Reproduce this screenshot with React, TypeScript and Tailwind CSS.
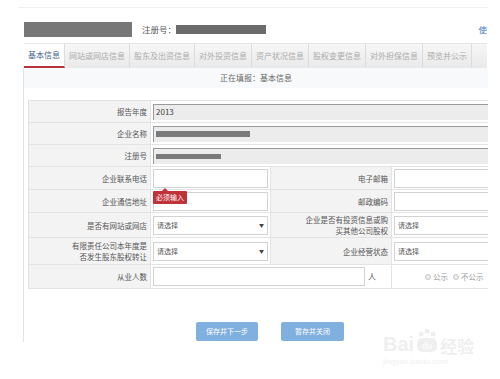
const tabs = [
  "基本信息",
  "网站或网店信息",
  "股东及出资信息",
  "对外投资信息",
  "资产状况信息",
  "股权变更信息",
  "对外担保信息",
  "预览并公示",
];

const font = { fontFamily: '"Noto Sans CJK SC", "Noto Sans", sans-serif' };

function Label({ children, className = "" }: { children: React.ReactNode; className?: string }) {
  return (
    <div
      className={`flex items-center justify-end pr-[3px] bg-[#f3f3f3] text-[#555] text-[7.5px] leading-[11px] text-right border-b border-r border-[#e3e3e3] ${className}`}
    >
      {children}
    </div>
  );
}

function Cell({ children, className = "" }: { children?: React.ReactNode; className?: string }) {
  return (
    <div className={`flex items-center pl-[2px] bg-white border-b border-r border-[#e3e3e3] ${className}`}>
      {children}
    </div>
  );
}

function TextBox({ w = "w-[115px]" }: { w?: string }) {
  return <div className={`h-[19px] ${w} shrink-0 border border-[#d2d2d2] bg-white`} />;
}

function Select({ w = "w-[115px]", arrow = true }: { w?: string; arrow?: boolean }) {
  return (
    <div
      className={`h-[19px] ${w} shrink-0 border border-[#d2d2d2] bg-white flex items-center justify-between pl-[3px] pr-[3px] text-[7px] text-[#555]`}
    >
      <span>请选择</span>
      {arrow && <span className="text-[5px] text-[#444]">▼</span>}
    </div>
  );
}

function Disabled({ children }: { children?: React.ReactNode }) {
  return (
    <div className="h-[16px] w-full bg-[#ececec] border-t border-l border-[#9a9a9a] flex items-center pl-[2px] text-[8px] text-[#444]">
      {children}
    </div>
  );
}

export default function App() {
  return (
    <div className="w-[500px] h-[379px] bg-white overflow-hidden relative" style={font}>
      <div className="w-[488px] overflow-hidden">
        <div className="ml-[18px] mt-[7px] h-px w-[470px] bg-[#efefef]" />

        {/* header */}
        <div className="mt-[13px] h-[16px] flex items-center">
          <div className="ml-[24px] w-[108px] h-[15px] bg-[#777]" />
          <span className="ml-[10px] text-[8.5px] text-[#555]">注册号：</span>
          <div className="w-[90px] h-[9px] bg-[#6b6b6b]" />
          <span className="ml-auto mr-[1px] text-[8.5px] text-[#3c7ac6]">使</span>
        </div>

        {/* tabs */}
        <div className="mt-[6px] ml-[24px] w-[463px] h-[25px] flex bg-gradient-to-b from-[#f7f7f7] to-[#e9e9e9] border-t border-[#e6e6e6]">
          {tabs.map((t, i) => (
            <div
              key={t}
              className={`px-1 flex items-center text-[8px] border-r border-[#dcdcdc] ${
                i === 0 ? "bg-white text-[#3f5f8f] border-b-2 border-b-[#b8343a]" : "text-[#ababab]"
              }`}
            >
              {t}
            </div>
          ))}
        </div>

        {/* body */}
        <div className="ml-[23px] border-l border-[#e4e4e4] h-[274px]">
          <div className="h-[20px] bg-[#f7f9fb] flex items-center justify-center text-[8px] text-[#666]">
            正在填报：基本信息
          </div>

          <div className="mt-[12px] ml-[4px] w-[470px] grid grid-cols-[122px_120px_121px_107px] border-t border-l border-[#e3e3e3]">
            <Label className="h-[22px]">报告年度</Label>
            <Cell className="col-span-3">
              <Disabled>2013</Disabled>
            </Cell>

            <Label className="h-[22px]">企业名称</Label>
            <Cell className="col-span-3">
              <Disabled>
                <div className="w-[94px] h-[6px] bg-[#7a7a7a]" />
              </Disabled>
            </Cell>

            <Label className="h-[22px]">注册号</Label>
            <Cell className="col-span-3">
              <Disabled>
                <div className="w-[65px] h-[5px] bg-[#7a7a7a]" />
              </Disabled>
            </Cell>

            <Label className="h-[23px]">企业联系电话</Label>
            <Cell>
              <TextBox />
            </Cell>
            <Label>电子邮箱</Label>
            <Cell>
              <TextBox w="w-[110px]" />
            </Cell>

            <Label className="h-[23px]">企业通信地址</Label>
            <Cell className="relative">
              <TextBox />
              <div className="absolute left-[2px] top-[1px] h-[13px] px-[3px] flex items-center bg-[#c0323a] text-white text-[7px] rounded-[1px]">
                必须输入
                <span className="absolute left-[9px] -top-[3px] w-0 h-0 border-l-[3px] border-r-[3px] border-b-[3px] border-l-transparent border-r-transparent border-b-[#c0323a]" />
              </div>
            </Cell>
            <Label>邮政编码</Label>
            <Cell>
              <TextBox w="w-[110px]" />
            </Cell>

            <Label className="h-[25px]">是否有网站或网店</Label>
            <Cell>
              <Select />
            </Cell>
            <Label>
              企业是否有投资信息或购
              <br />
              买其他公司股权
            </Label>
            <Cell>
              <Select w="w-[110px]" arrow={false} />
            </Cell>

            <Label className="h-[27px]">
              有限责任公司本年度是
              <br />
              否发生股东股权转让
            </Label>
            <Cell>
              <Select />
            </Cell>
            <Label>企业经营状态</Label>
            <Cell>
              <Select w="w-[110px]" arrow={false} />
            </Cell>

            <Label className="h-[24px]">从业人数</Label>
            <Cell className="col-span-2">
              <TextBox w="w-[212px]" />
              <span className="ml-[3px] text-[8px] text-[#555]">人</span>
            </Cell>
            <Cell className="pl-[33px] gap-[2px] text-[7.5px] text-[#9a9a9a]">
              <span className="w-[6px] h-[6px] rounded-full border border-[#c8c8c8] bg-[#eee]" />
              <span>公示</span>
              <span className="ml-[3px] w-[6px] h-[6px] rounded-full border border-[#c8c8c8] bg-[#eee]" />
              <span>不公示</span>
            </Cell>
          </div>

          <div className="mt-[33px] flex ml-[172px] gap-[23px]">
            <button className="w-[62px] h-[19px] rounded-[2px] bg-[#80b0df] text-white text-[7px]">
              保存并下一步
            </button>
            <button className="w-[63px] h-[19px] rounded-[2px] bg-[#80b0df] text-white text-[7px]">
              暂存并关闭
            </button>
          </div>
        </div>
      </div>

      {/* watermark */}
      <div className="absolute left-[383px] top-[328px] flex flex-col items-start text-[#efefef]">
        <div className="flex items-end h-[26px]">
          <span className="text-[20px] font-bold leading-none" style={{ fontFamily: '"Liberation Sans", sans-serif' }}>
            Bai
          </span>
          <svg width="24" height="26" viewBox="0 0 24 26" className="mx-[1px]">
            <circle cx="6" cy="6" r="2.5" fill="#efefef" />
            <circle cx="12" cy="3" r="2.5" fill="#efefef" />
            <circle cx="18" cy="6" r="2.5" fill="#efefef" />
            <rect x="2" y="10" width="20" height="14" rx="5" fill="#efefef" />
            <text x="12" y="21" fontSize="9" textAnchor="middle" fill="#fff" fontFamily="Liberation Sans">du</text>
          </svg>
          <span className="text-[17px] font-bold leading-none">经验</span>
        </div>
        <span className="text-[8px] mt-[2px] text-[#f0f0f0]" style={{ fontFamily: '"Liberation Sans", sans-serif' }}>
          jingyan.baidu.com
        </span>
      </div>
    </div>
  );
}
